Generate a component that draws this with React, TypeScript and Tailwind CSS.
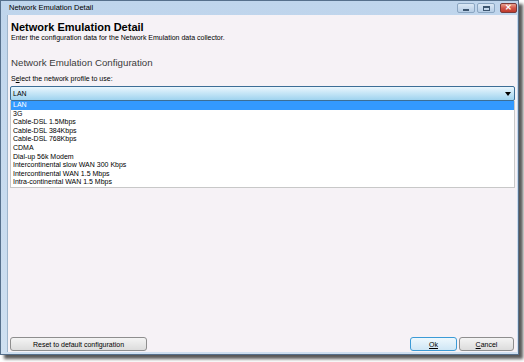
import React from 'react';

const profiles = [
  'LAN',
  '3G',
  'Cable-DSL 1.5Mbps',
  'Cable-DSL 384Kbps',
  'Cable-DSL 768Kbps',
  'CDMA',
  'Dial-up 56k Modem',
  'Intercontinental slow WAN 300 Kbps',
  'Intercontinental WAN 1.5 Mbps',
  'Intra-continental WAN 1.5 Mbps',
];

const TitleButton: React.FC<{ kind: 'min' | 'max' | 'close' }> = ({ kind }) => {
  if (kind === 'close') {
    return (
      <div className="w-[17px] h-[10px] rounded-[2px] border border-[#7a3a3a] bg-gradient-to-b from-[#e8a08f] via-[#d2574a] to-[#c0392b] flex items-center justify-center">
        <span className="text-white text-[8px] leading-none font-bold">✕</span>
      </div>
    );
  }
  return (
    <div className="w-[18px] h-[10px] rounded-[2px] border border-[#8ba6c2] bg-gradient-to-b from-[#dbe8f5] to-[#b6cde5] flex items-center justify-center">
      {kind === 'min' ? (
        <div className="w-[6px] h-[2px] bg-[#3d5670] mt-[3px]" />
      ) : (
        <div className="w-[7px] h-[5px] border border-[#3d5670] border-t-2" />
      )}
    </div>
  );
};

const Button: React.FC<{ label: React.ReactNode; width: string; isDefault?: boolean }> = ({ label, width, isDefault }) => (
  <button
    className={`${width} h-[14px] rounded-[3px] border ${
      isDefault ? 'border-[#3c9bd6] from-[#eef8fd] to-[#cfe6f5]' : 'border-[#8e8e8e] from-[#f4f4f4] to-[#dcdcdc]'
    } bg-gradient-to-b text-[7px] leading-none text-black flex items-center justify-center`}
  >
    {label}
  </button>
);

export default function App() {
  return (
    <div className="w-[524px] h-[362px] bg-white overflow-hidden font-['Liberation_Sans',Arial,sans-serif]">
      <div className="w-[519px] h-[355px] flex flex-col bg-gradient-to-b from-[#bfd5ec] to-[#cfe0f1] border border-[#56708c] shadow-[4px_4px_3px_rgba(0,0,0,0.65)]">
        {/* title bar */}
        <div className="h-[14px] flex items-center pl-[8px] pr-[1px] shrink-0">
          <span className="text-[7.5px] text-black">Network Emulation Detail</span>
          <div className="ml-auto flex items-center gap-[2px]">
            <TitleButton kind="min" />
            <TitleButton kind="max" />
            <div className="w-[1px]" />
            <TitleButton kind="close" />
          </div>
        </div>

        {/* client area */}
        <div className="flex-1 ml-[6px] mr-[1px] mb-[2px] bg-[#f6f2f6] flex flex-col px-[2px] border-l border-[#9fb6cc]">
          <div className="pl-[1px] pt-[6px]">
            <div className="text-[11px] font-bold leading-[13px] text-black">Network Emulation Detail</div>
            <div className="text-[7px] leading-[8px] text-black">
              Enter the configuration data for the Network Emulation data collector.
            </div>
            <div className="mt-[15px] text-[9.7px] leading-[12px] text-[#3a3a3a]">Network Emulation Configuration</div>
            <div className="mt-[6px] text-[7px] leading-[8px] text-black">
              S<span className="underline">e</span>lect the network profile to use:
            </div>
          </div>

          {/* combo box */}
          <div className="mt-[3px] h-[15px] rounded-[2px] border border-[#3c6e96] bg-gradient-to-b from-[#eaf6fd] via-[#c4e5f6] to-[#9fd3ef] flex items-center px-[2px]">
            <span className="text-[7px] leading-none text-black">LAN</span>
            <svg className="ml-auto mr-[1px]" width="6" height="4" viewBox="0 0 6 4">
              <path d="M0 0H6L3 4Z" fill="#000" />
            </svg>
          </div>

          {/* dropdown list */}
          <div className="h-[87px] bg-white border border-[#c8c8c8] border-t-0 flex flex-col">
            {profiles.map((p, i) => (
              <div
                key={p}
                className={`h-[8.6px] px-[2px] text-[7px] leading-[8.6px] ${
                  i === 0 ? 'bg-[#3399ff] text-white' : 'text-black'
                }`}
              >
                {p}
              </div>
            ))}
          </div>

          {/* buttons */}
          <div className="mt-auto mb-[1px] flex items-center">
            <Button label="Reset to default configuration" width="w-[137px]" />
            <div className="ml-auto flex gap-[2px] mr-[1px]">
              <Button label={<span className="underline">Ok</span>} width="w-[47px]" isDefault />
              <Button
                label={
                  <span>
                    <span className="underline">C</span>ancel
                  </span>
                }
                width="w-[55px]"
              />
            </div>
          </div>
        </div>
      </div>
    </div>
  );
}
